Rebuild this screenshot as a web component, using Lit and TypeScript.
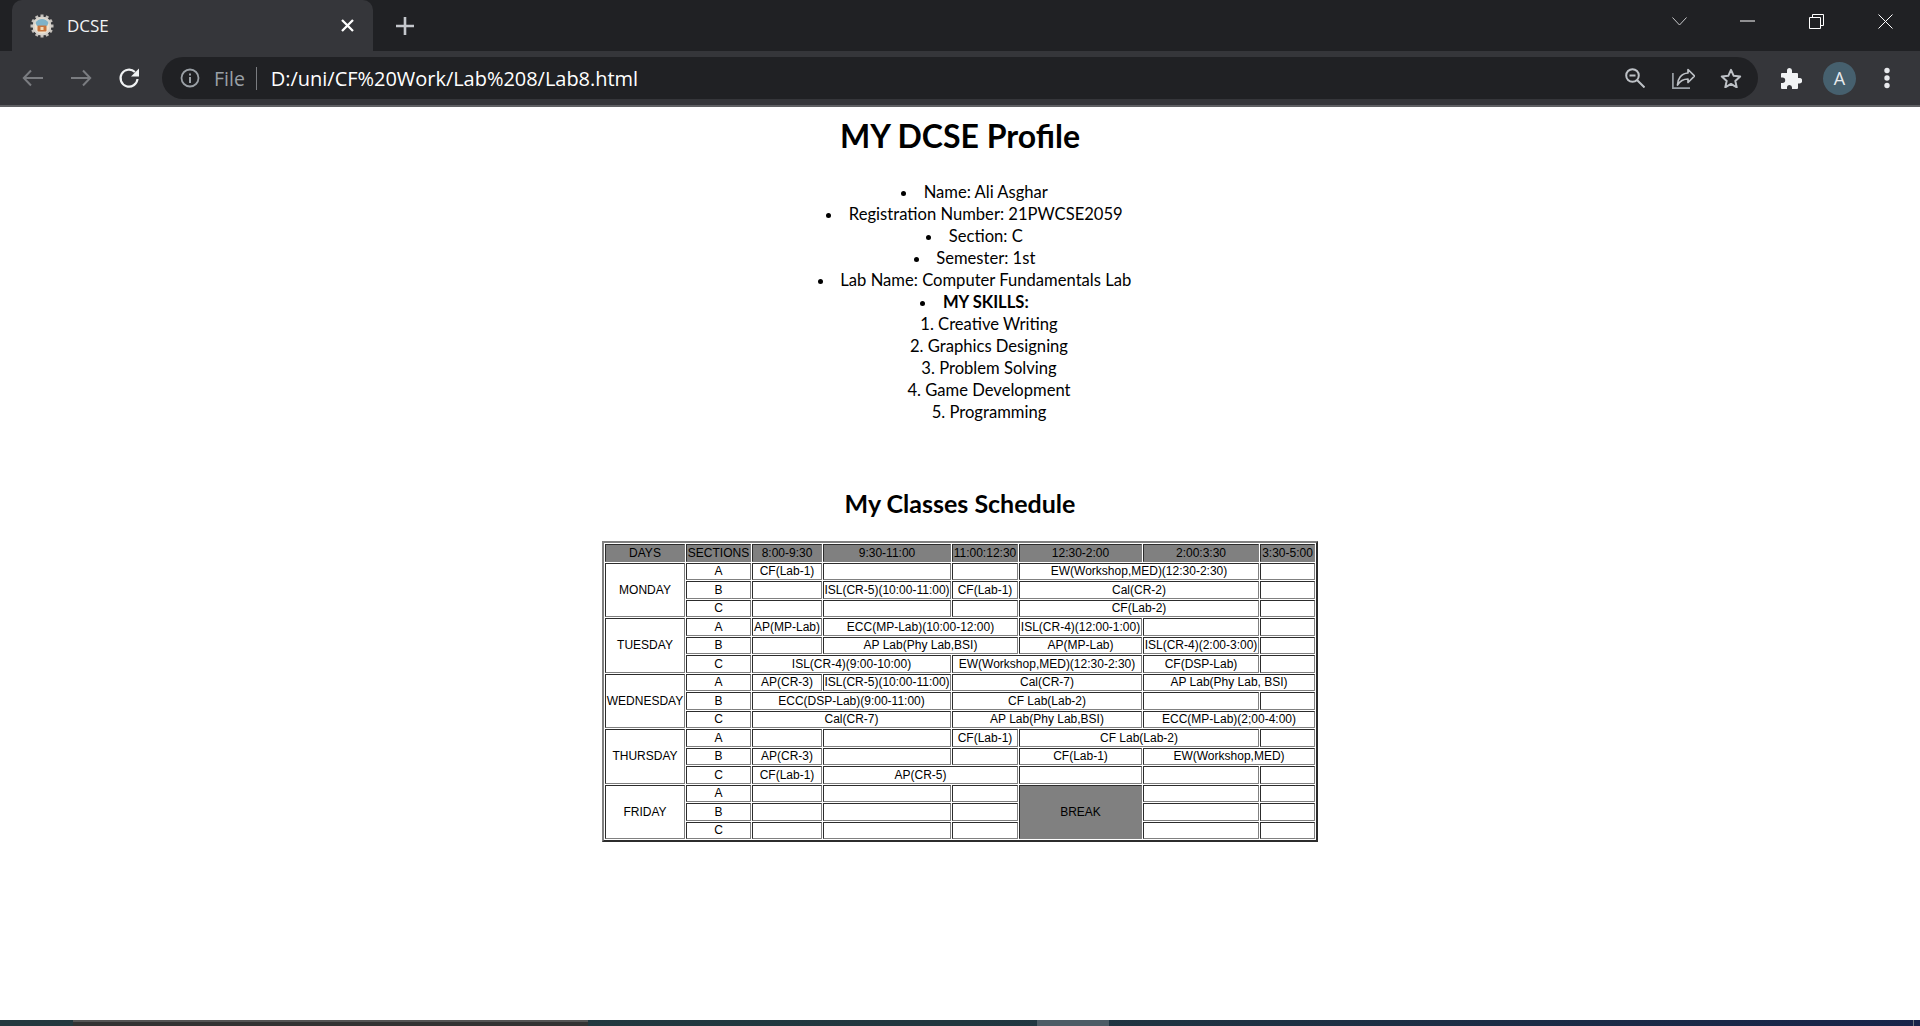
import { LitElement, html, css, svg, nothing } from "lit";
import { customElement } from "lit/decorators.js";

type Cell = { t?: string; cs?: number; rs?: number; cls?: string };
const c = (t = "", cs?: number): Cell => ({ t, cs });
const e = (): Cell => ({ t: "" });

const HEAD = ["DAYS", "SECTIONS", "8:00-9:30", "9:30-11:00", "11:00:12:30", "12:30-2:00", "2:00:3:30", "3:30-5:00"];
const COLS = [80, 65, 70, 128, 66, 123, 116, 55];

const DAYS: { name: string; rows: Cell[][] }[] = [
  { name: "MONDAY", rows: [
    [c("CF(Lab-1)"), e(), e(), c("EW(Workshop,MED)(12:30-2:30)", 2), e()],
    [e(), c("ISL(CR-5)(10:00-11:00)"), c("CF(Lab-1)"), c("Cal(CR-2)", 2), e()],
    [e(), e(), e(), c("CF(Lab-2)", 2), e()],
  ]},
  { name: "TUESDAY", rows: [
    [c("AP(MP-Lab)"), c("ECC(MP-Lab)(10:00-12:00)", 2), c("ISL(CR-4)(12:00-1:00)"), e(), e()],
    [e(), c("AP Lab(Phy Lab,BSI)", 2), c("AP(MP-Lab)"), c("ISL(CR-4)(2:00-3:00)"), e()],
    [c("ISL(CR-4)(9:00-10:00)", 2), c("EW(Workshop,MED)(12:30-2:30)", 2), c("CF(DSP-Lab)"), e()],
  ]},
  { name: "WEDNESDAY", rows: [
    [c("AP(CR-3)"), c("ISL(CR-5)(10:00-11:00)"), c("Cal(CR-7)", 2), c("AP Lab(Phy Lab, BSI)", 2)],
    [c("ECC(DSP-Lab)(9:00-11:00)", 2), c("CF Lab(Lab-2)", 2), e(), e()],
    [c("Cal(CR-7)", 2), c("AP Lab(Phy Lab,BSI)", 2), c("ECC(MP-Lab)(2;00-4:00)", 2)],
  ]},
  { name: "THURSDAY", rows: [
    [e(), e(), c("CF(Lab-1)"), c("CF Lab(Lab-2)", 2), e()],
    [c("AP(CR-3)"), e(), e(), c("CF(Lab-1)"), c("EW(Workshop,MED)", 2)],
    [c("CF(Lab-1)"), c("AP(CR-5)", 2), e(), e(), e()],
  ]},
  { name: "FRIDAY", rows: [
    [e(), e(), e(), { t: "BREAK", rs: 3, cls: "grey" }, e(), e()],
    [e(), e(), e(), e(), e()],
    [e(), e(), e(), e(), e()],
  ]},
];

@customElement("app-root")
export class AppRoot extends LitElement {
  static styles = css`
    :host { display: block; height: 1026px; overflow: hidden; background: #fff; color: #000; }
    .app { display: flex; flex-direction: column; height: 1026px; }
    svg { display: block; flex: none; }

    .tabstrip { height: 51px; flex: none; background: #202124; display: flex; align-items: center; }
    .tab { width: 361px; height: 51px; margin-left: 12px; background: #35363a; border-radius: 10px 10px 0 0;
      display: flex; align-items: center; padding: 0 19px 0 18px; box-sizing: border-box; }
    .tab .title { color: #f1f3f4; font: 17px "Open Sans", sans-serif; margin-left: 13px; flex: 1; }
    .plus { margin-left: 23px; }
    .winctl { margin-left: auto; margin-right: 27px; height: 43px; align-self: flex-start; display: flex; align-items: center; }
    .chev { margin-right: 53px; }
    .min { margin-right: 54px; }
    .rest { margin-right: 54px; }

    .toolbar { height: 54px; flex: none; background: #35363a; display: flex; align-items: center; border-bottom: 2px solid #5f6063; padding-left: 9px; }
    .navbtn { width: 48px; display: flex; justify-content: center; }
    .omni { width: 1596px; margin-left: 9px; height: 42px; border-radius: 21px; background: #202124; display: flex; align-items: center; box-sizing: border-box; padding-left: 18px; }
    .omni .file { color: #9aa0a6; font: 19.500px "Open Sans", sans-serif; margin-left: 14px; }
    .omni .sep { width: 1px; height: 23px; background: #7a7c80; margin: 0 14px 0 11px; }
    .omni .url { color: #fff; font: 20px "Open Sans", sans-serif; flex: 1; letter-spacing: -.03px; }
    .oicons { display: flex; align-items: center; margin-right: 16px; }
    .zoom { margin-right: 27px; }
    .share { margin-right: 25px; }
    .tools { display: flex; align-items: center; margin-left: 23px; }
    .avatar { width: 33px; height: 33px; border-radius: 50%; background: #46606e; color: #e8eaed; font: 18px "Open Sans", sans-serif; display: flex; align-items: center; justify-content: center; margin-left: 21px; }
    .dots { margin-left: 28px; }

    .page { flex: 1; min-height: 0; background: #fff; text-align: center; font-family: Lato, sans-serif; }
    h1 { margin: 0; font: 700 32px/37px Lato, sans-serif; padding-top: 10px; }
    ul, ol { list-style-position: inside; margin: 0; padding: 0 0 0 29px; }
    ul { margin-top: 27px; list-style-type: disc; }
    li { font: 16.600px/22px Lato, sans-serif; }
    ol { list-style-type: decimal; }
    h2 { margin: 0; padding-top: 66px; font: 700 25px/28px Lato, sans-serif; }

    table { margin: 24px auto 0; width: 716px; table-layout: fixed; border: 2px outset #808080; border-spacing: 1px; border-collapse: separate; font: 12px "Liberation Sans", Arial, sans-serif; }
    tr:nth-child(odd) { height: 18px; }
    tr:nth-child(even) { height: 17px; }
    th, td { border: 1px inset #808080; padding: 0 0 1px; box-sizing: border-box; text-align: center; vertical-align: middle; font-weight: 400; white-space: nowrap; line-height: 14px; }
    th, .grey { background: #808080; }

    .taskbar { height: 6px; flex: none; background: linear-gradient(90deg, #233a40 0%, #213840 50%, #18244a 100%); display: flex; align-items: stretch; }
    .tb1 { width: 73px; }
    .tb2 { width: 515px; background: #333; border-top: 2px solid #555; box-sizing: border-box; }
    .tb3 { width: 449px; }
    .tb4 { width: 72px; background: #4d5c66; }
    .tb5 { width: 1px; background: #6d7780; margin-left: auto; margin-right: 6px; }
  `;

  private favicon() {
    return html`<svg width="24" height="24" viewBox="0 0 24 24">
      <g fill="#c4c0bb">
        ${[0, 30, 60, 90, 120, 150, 180, 210, 240, 270, 300, 330].map((a) => svg`<rect x="10.500" y="0.500" width="3" height="4" transform="rotate(${a} 12 12)"/>`)}
      </g>
      <circle cx="12" cy="12" r="9.500" fill="#d8d4ce"/>
      <circle cx="12" cy="12" r="7.500" fill="#efe2cf"/>
      <path d="M5.500 9a7.200 7.200 0 0 1 13 0l-1.500 3H7z" fill="#7fb2c9"/>
      <rect x="7.500" y="11.500" width="9" height="6" rx="1" fill="#c9743c"/>
      <rect x="10.500" y="13" width="3" height="3" fill="#f1d9b8"/>
    </svg>`;
  }

  render() {
    return html`<div class="app">
      <div class="tabstrip">
        <div class="tab">
          ${this.favicon()}
          <span class="title">DCSE</span>
          <svg width="13" height="13" viewBox="0 0 13 13"><path d="M1 1l11 11M12 1L1 12" stroke="#fff" stroke-width="2.300" fill="none"/></svg>
        </div>
        <div class="plus"><svg width="18" height="18" viewBox="0 0 18 18"><path d="M9 0v18M0 9h18" stroke="#c4c7cc" stroke-width="2.600"/></svg></div>
        <div class="winctl">
          <svg class="chev" width="15" height="15" viewBox="0 0 15 15"><path d="M.5 3.500l7 7.500 7-7.500" stroke="#c8c9cb" fill="none"/></svg>
          <svg class="min" width="15" height="15" viewBox="0 0 15 15"><path d="M0 7h15" stroke="#fff"/></svg>
          <svg class="rest" width="15" height="15" viewBox="0 0 15 15"><path d="M.5 3.500h11v11H.5zM3.500 3.500v-3h11v11h-3" stroke="#fff" fill="none"/></svg>
          <svg width="15" height="15" viewBox="0 0 15 15"><path d="M.5.500l14 14M14.500.500l-14 14" stroke="#fff" fill="none"/></svg>
        </div>
      </div>
      <div class="toolbar">
        <div class="navbtn"><svg width="24" height="24" viewBox="0 0 24 24"><path d="M22 12H3M10 4.500 2.800 12l7.200 7.500" stroke="#7a7c80" stroke-width="2" fill="none"/></svg></div>
        <div class="navbtn"><svg width="24" height="24" viewBox="0 0 24 24"><path d="M2 12h19M14 4.500l7.200 7.500-7.200 7.500" stroke="#7a7c80" stroke-width="2" fill="none"/></svg></div>
        <div class="navbtn"><svg width="24" height="24" viewBox="0 0 24 24"><path d="M20.500 13a8.500 8.500 0 1 1-2.600-7" stroke="#f1f3f4" stroke-width="2.200" fill="none"/><path d="M22 2.500v8h-8z" fill="#f1f3f4"/></svg></div>
        <div class="omni">
          <svg width="20" height="20" viewBox="0 0 20 20"><circle cx="10" cy="10" r="8.500" stroke="#9aa0a6" stroke-width="1.800" fill="none"/><path d="M9 9h2v6H9zM9 5.500h2v2H9z" fill="#9aa0a6"/></svg>
          <span class="file">File</span>
          <span class="sep"></span>
          <span class="url">D:/uni/CF%20Work/Lab%208/Lab8.html</span>
          <div class="oicons">
            <svg class="zoom" width="20" height="20" viewBox="0 0 20 20"><circle cx="7.500" cy="7.500" r="6.300" stroke="#bdc1c6" stroke-width="2" fill="none"/><path d="M4.500 7.500h6M12 12l7.500 7.500" stroke="#bdc1c6" stroke-width="2" fill="none"/></svg>
            <svg class="share" width="23" height="21" viewBox="0 0 23 21"><path d="M.9 5v15.100H18" stroke="#9aa0a6" stroke-width="1.700" fill="none"/><path d="M16 1.500 22.500 8 16 14.500V11c-5 0-8 2-10.500 6C5.500 11 9 5.500 16 5z" stroke="#bdc1c6" stroke-width="1.700" fill="none" stroke-linejoin="round"/></svg>
            <svg width="22" height="20" viewBox="0 0 22 20"><path d="M11 1.800l2.700 6 6.500.7-4.900 4.400 1.400 6.400L11 15.900l-5.700 3.400 1.400-6.400L1.800 8.500l6.500-.7z" stroke="#bdc1c6" stroke-width="2" fill="none" stroke-linejoin="round"/></svg>
          </div>
        </div>
        <div class="tools">
          <svg width="21" height="21" viewBox="3 1 21 21"><path d="M9 3.500a2.500 2.500 0 0 1 5 0V6h5a1 1 0 0 1 1 1v4h1.500a2.700 2.700 0 0 1 0 5.400H20V21a1 1 0 0 1-1 1h-5v-1.500a2.500 2.500 0 0 0-5 0V22H4a1 1 0 0 1-1-1v-5h1.500a2.700 2.700 0 0 0 0-5.400H3V7a1 1 0 0 1 1-1h5z" fill="#f1f3f4"/></svg>
          <div class="avatar">A</div>
          <svg class="dots" width="6" height="22" viewBox="0 0 6 22"><circle cx="3" cy="3.500" r="2.700" fill="#e8eaed"/><circle cx="3" cy="11" r="2.700" fill="#e8eaed"/><circle cx="3" cy="18.500" r="2.700" fill="#e8eaed"/></svg>
        </div>
      </div>
      <div class="page">
        <h1>MY DCSE Profile</h1>
        <ul>
          <li>Name: Ali Asghar</li>
          <li>Registration Number: 21PWCSE2059</li>
          <li>Section: C</li>
          <li>Semester: 1st</li>
          <li>Lab Name: Computer Fundamentals Lab</li>
          <li><b>MY SKILLS:</b>
            <ol>
              <li>Creative Writing</li>
              <li>Graphics Designing</li>
              <li>Problem Solving</li>
              <li>Game Development</li>
              <li>Programming</li>
            </ol>
          </li>
        </ul>
        <h2>My Classes Schedule</h2>
        <table>
          <colgroup>${COLS.map((w) => html`<col style="width:${w}px" />`)}</colgroup>
          <tr>${HEAD.map((h) => html`<th>${h}</th>`)}</tr>
          ${DAYS.map((d) => d.rows.map((r, i) => html`<tr>
            ${i === 0 ? html`<td rowspan="3">${d.name}</td>` : nothing}
            <td>${"ABC"[i]}</td>
            ${r.map((x) => html`<td colspan=${x.cs ?? 1} rowspan=${x.rs ?? 1} class=${x.cls ?? ""}>${x.t}</td>`)}
          </tr>`))}
        </table>
      </div>
      <div class="taskbar"><div class="tb1"></div><div class="tb2"></div><div class="tb3"></div><div class="tb4"></div><div class="tb5"></div></div>
    </div>`;
  }
}
